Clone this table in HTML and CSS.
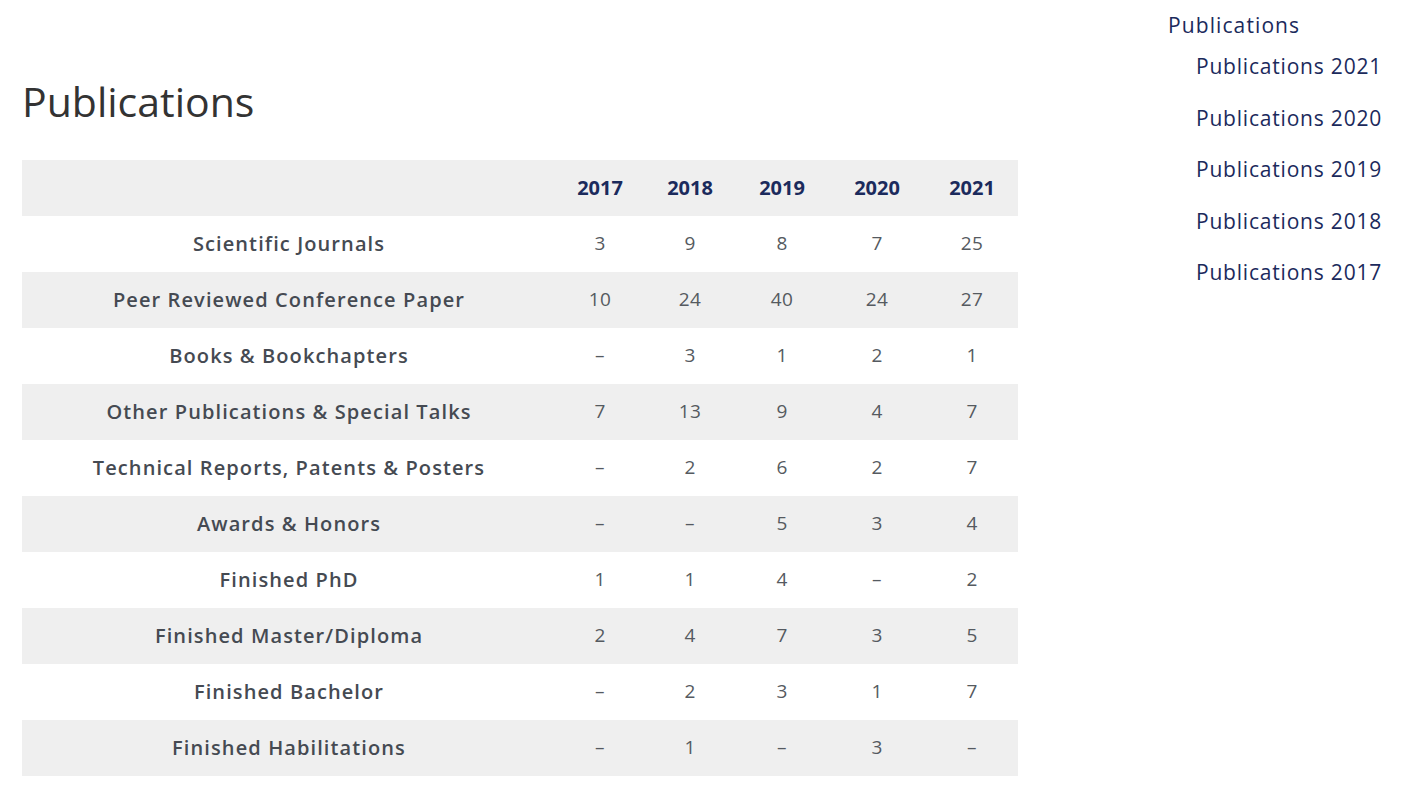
FILE: index.html
```html
<!DOCTYPE html>
<html lang="en">
<head>
<meta charset="utf-8">
<title>Publications</title>
<link rel="stylesheet" href="styles.css">
</head>
<body>
<div class="page">
  <main class="main">
    <h1 class="title">Publications</h1>
    <table class="stats">
      <colgroup>
        <col class="c-label"><col class="c-2017"><col class="c-2018"><col class="c-2019"><col class="c-2020"><col class="c-2021">
      </colgroup>
      <thead>
        <tr><th></th><th>2017</th><th>2018</th><th>2019</th><th>2020</th><th>2021</th></tr>
      </thead>
      <tbody>
        <tr><td class="label">Scientific Journals</td><td>3</td><td>9</td><td>8</td><td>7</td><td>25</td></tr>
        <tr><td class="label">Peer Reviewed Conference Paper</td><td>10</td><td>24</td><td>40</td><td>24</td><td>27</td></tr>
        <tr><td class="label">Books &amp; Bookchapters</td><td>–</td><td>3</td><td>1</td><td>2</td><td>1</td></tr>
        <tr><td class="label">Other Publications &amp; Special Talks</td><td>7</td><td>13</td><td>9</td><td>4</td><td>7</td></tr>
        <tr><td class="label">Technical Reports, Patents &amp; Posters</td><td>–</td><td>2</td><td>6</td><td>2</td><td>7</td></tr>
        <tr><td class="label">Awards &amp; Honors</td><td>–</td><td>–</td><td>5</td><td>3</td><td>4</td></tr>
        <tr><td class="label">Finished PhD</td><td>1</td><td>1</td><td>4</td><td>–</td><td>2</td></tr>
        <tr><td class="label">Finished Master/Diploma</td><td>2</td><td>4</td><td>7</td><td>3</td><td>5</td></tr>
        <tr><td class="label">Finished Bachelor</td><td>–</td><td>2</td><td>3</td><td>1</td><td>7</td></tr>
        <tr><td class="label">Finished Habilitations</td><td>–</td><td>1</td><td>–</td><td>3</td><td>–</td></tr>
      </tbody>
    </table>
  </main>
  <nav class="toc">
    <a class="toc-top" href="#">Publications</a>
    <ul class="toc-list">
      <li><a href="#">Publications 2021</a></li>
      <li><a href="#">Publications 2020</a></li>
      <li><a href="#">Publications 2019</a></li>
      <li><a href="#">Publications 2018</a></li>
      <li><a href="#">Publications 2017</a></li>
    </ul>
  </nav>
</div>
</body>
</html>
```

FILE: styles.css
```css
html, body {
  margin: 0;
  padding: 0;
  background: #ffffff;
}
body {
  font-family: "Open Sans", "Noto Sans", sans-serif;
  color: #454a52;
}
.page {
  display: flex;
  align-items: flex-start;
}
.main {
  width: 996px;
  margin-left: 22px;
}
.title {
  margin: 76px 0 0 0;
  height: 84px;
  font-family: "Open Sans", sans-serif;
  font-weight: 400;
  font-size: 41px;
  line-height: 50px;
  color: #333333;
  letter-spacing: 0;
}
.stats {
  width: 996px;
  border-collapse: collapse;
  table-layout: fixed;
}
.c-label { width: 534px; }
.c-2017 { width: 88px; }
.c-2018 { width: 92px; }
.c-2019 { width: 92px; }
.c-2020 { width: 98px; }
.c-2021 { width: 92px; }
.stats th, .stats td {
  height: 56px;
  padding: 0 0 2px 0;
  box-sizing: border-box;
  text-align: center;
  vertical-align: middle;
}
.stats thead tr {
  background: #efefef;
}
.stats th {
  font-weight: 700;
  font-size: 20px;
  color: #1b2a5c;
}
.stats tbody tr:nth-child(even) {
  background: #efefef;
}
.stats td {
  font-size: 19px;
  color: #555a60;
  letter-spacing: 0.3px;
}
.stats td.label {
  font-size: 20px;
  font-weight: 600;
  color: #454a52;
  letter-spacing: 1.1px;
}
.toc {
  margin-left: 150px;
  padding-top: 10px;
  font-size: 21px;
}
.toc a {
  color: #1b2a5c;
  text-decoration: none;
  letter-spacing: 0.8px;
}
.toc a.toc-top {
  display: block;
  line-height: 30px;
  letter-spacing: 1.1px;
}
.toc-list {
  list-style: none;
  margin: 0;
  padding: 0 0 0 28px;
}
.toc-list li {
  line-height: 30px;
  margin-top: 21.5px;
}
.toc-list li:first-child {
  margin-top: 11px;
}
```
